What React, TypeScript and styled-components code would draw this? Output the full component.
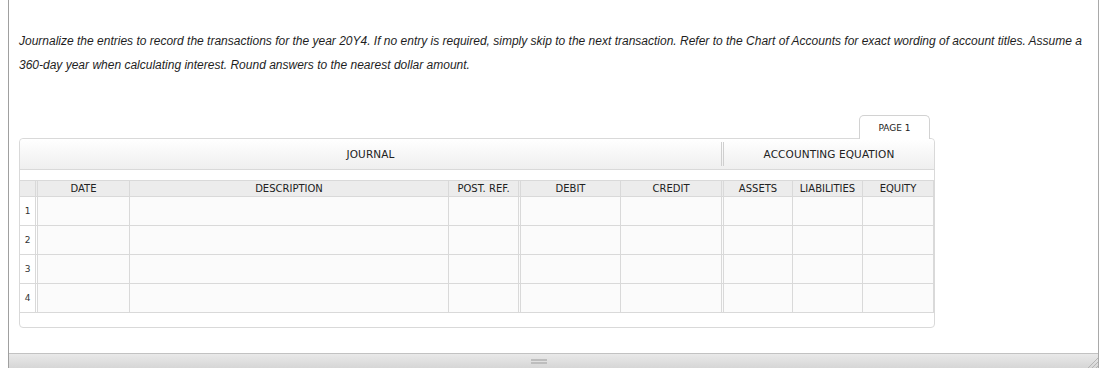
import React from "react";
import styled, { createGlobalStyle } from "styled-components";

const GlobalStyle = createGlobalStyle`
  html, body { margin: 0; padding: 0; background: #ffffff; }
  body { font-family: "Liberation Sans", Arial, sans-serif; overflow: hidden; }
  * { box-sizing: border-box; }
`;

const LINE = "#d9d9d9";

const Frame = styled.div`
  margin-left: 8px;
  width: 1091px;
  height: 368px;
  border-left: 1px solid #a0a0a0;
  border-right: 1px solid #a9a9a9;
  display: flex;
  flex-direction: column;
  background: #fff;
`;

const Content = styled.div`
  flex: 1;
  padding: 29px 10px 0 10px;
  display: flex;
  flex-direction: column;
`;

const Instructions = styled.p`
  margin: 0;
  font-family: "Liberation Sans", Arial, sans-serif;
  font-style: italic;
  font-size: 12px;
  line-height: 24px;
  color: #1e1e1e;
`;

const JournalArea = styled.div`
  margin-top: 38px;
  width: 916px;
  display: flex;
  flex-direction: column;
  font-family: "DejaVu Sans", Verdana, sans-serif;
  color: #222;
`;

const TabRow = styled.div`
  display: flex;
  justify-content: flex-end;
  padding-right: 5px;
`;

const Tab = styled.div`
  width: 71px;
  height: 24px;
  margin-bottom: -1px;
  border: 1px solid #d2d2d2;
  border-bottom: none;
  border-radius: 5px 5px 0 0;
  background: #fff;
  display: flex;
  align-items: center;
  justify-content: center;
  font-size: 9px;
  position: relative;
  z-index: 1;
`;

const Card = styled.div`
  border: 1px solid ${LINE};
  border-radius: 4px;
  padding-bottom: 14px;
  background: #fff;
`;

const HeaderBand = styled.div`
  height: 31px;
  display: grid;
  grid-template-columns: 701px 3px 210px;
  align-items: center;
  border-bottom: 1px solid ${LINE};
  border-radius: 4px 4px 0 0;
  background: linear-gradient(#ffffff, #efefef);
  margin-bottom: 10px;
`;

const BandTitle = styled.div`
  text-align: center;
  font-size: 10.5px;
  letter-spacing: 0.1px;
`;

const BandDivider = styled.div`
  height: 24px;
  border-left: 3px double #cfcfcf;
`;

const Grid = styled.div`
  display: grid;
  grid-template-columns: 18px 92px 319px 72px 100px 103px 69px 70px 71px;
  border-top: 1px solid ${LINE};
`;

const HeadCell = styled.div<{ $double?: boolean }>`
  height: 16px;
  background: #ececec;
  border-bottom: 1px solid ${LINE};
  border-right: ${(p) => (p.$double ? `3px double ${LINE}` : `1px solid ${LINE}`)};
  font-size: 10px;
  display: flex;
  align-items: center;
  justify-content: center;
  white-space: nowrap;
`;

const Cell = styled.div<{ $double?: boolean }>`
  height: 29px;
  background: #fbfbfb;
  border-bottom: 1px solid ${LINE};
  border-right: ${(p) => (p.$double ? `3px double ${LINE}` : `1px solid ${LINE}`)};
`;

const NumCell = styled(Cell)`
  background: #fff;
  font-size: 9px;
  display: flex;
  align-items: center;
  justify-content: center;
  color: #333;
`;

const BottomBar = styled.div`
  height: 15px;
  border-top: 1px solid #c2c2c2;
  background: linear-gradient(#e9e9e9, #d6d6d6);
  display: flex;
  align-items: center;
  justify-content: center;
  position: relative;
`;

const Grip = styled.div`
  width: 16px;
  height: 5px;
  margin-right: 30px;
  margin-top: 1px;
  border-top: 2px solid #bdbdbd;
  border-bottom: 2px solid #bdbdbd;
  background: #e0e0e0;
`;

const CornerGrip = styled.svg`
  position: absolute;
  right: 0;
  bottom: 0;
`;

const columns: { label: string; double?: boolean }[] = [
  { label: "", double: true },
  { label: "DATE" },
  { label: "DESCRIPTION" },
  { label: "POST. REF.", double: true },
  { label: "DEBIT" },
  { label: "CREDIT", double: true },
  { label: "ASSETS" },
  { label: "LIABILITIES" },
  { label: "EQUITY" },
];

export default function App() {
  const rows = [1, 2, 3, 4];
  return (
    <>
      <GlobalStyle />
      <Frame>
        <Content>
          <Instructions>
            Journalize the entries to record the transactions for the year 20Y4. If no entry is required, simply skip
            to the next transaction. Refer to the Chart of Accounts for exact wording of account titles. Assume a
            360-day year when calculating interest. Round answers to the nearest dollar amount.
          </Instructions>
          <JournalArea>
            <TabRow>
              <Tab>PAGE 1</Tab>
            </TabRow>
            <Card>
              <HeaderBand>
                <BandTitle>JOURNAL</BandTitle>
                <BandDivider />
                <BandTitle>ACCOUNTING EQUATION</BandTitle>
              </HeaderBand>
              <Grid>
                {columns.map((c, i) => (
                  <HeadCell key={`h${i}`} $double={c.double}>
                    {c.label}
                  </HeadCell>
                ))}
                {rows.map((r) =>
                  columns.map((c, i) =>
                    i === 0 ? (
                      <NumCell key={`${r}-${i}`} $double>
                        {r}
                      </NumCell>
                    ) : (
                      <Cell key={`${r}-${i}`} $double={c.double} />
                    )
                  )
                )}
              </Grid>
            </Card>
          </JournalArea>
        </Content>
        <BottomBar>
          <Grip />
          <CornerGrip width="12" height="12" viewBox="0 0 12 12">
            <line x1="12" y1="2" x2="2" y2="12" stroke="#b5b5b5" strokeWidth="1" />
            <line x1="12" y1="6" x2="6" y2="12" stroke="#b5b5b5" strokeWidth="1" />
            <line x1="12" y1="10" x2="10" y2="12" stroke="#b5b5b5" strokeWidth="1" />
          </CornerGrip>
        </BottomBar>
      </Frame>
    </>
  );
}
